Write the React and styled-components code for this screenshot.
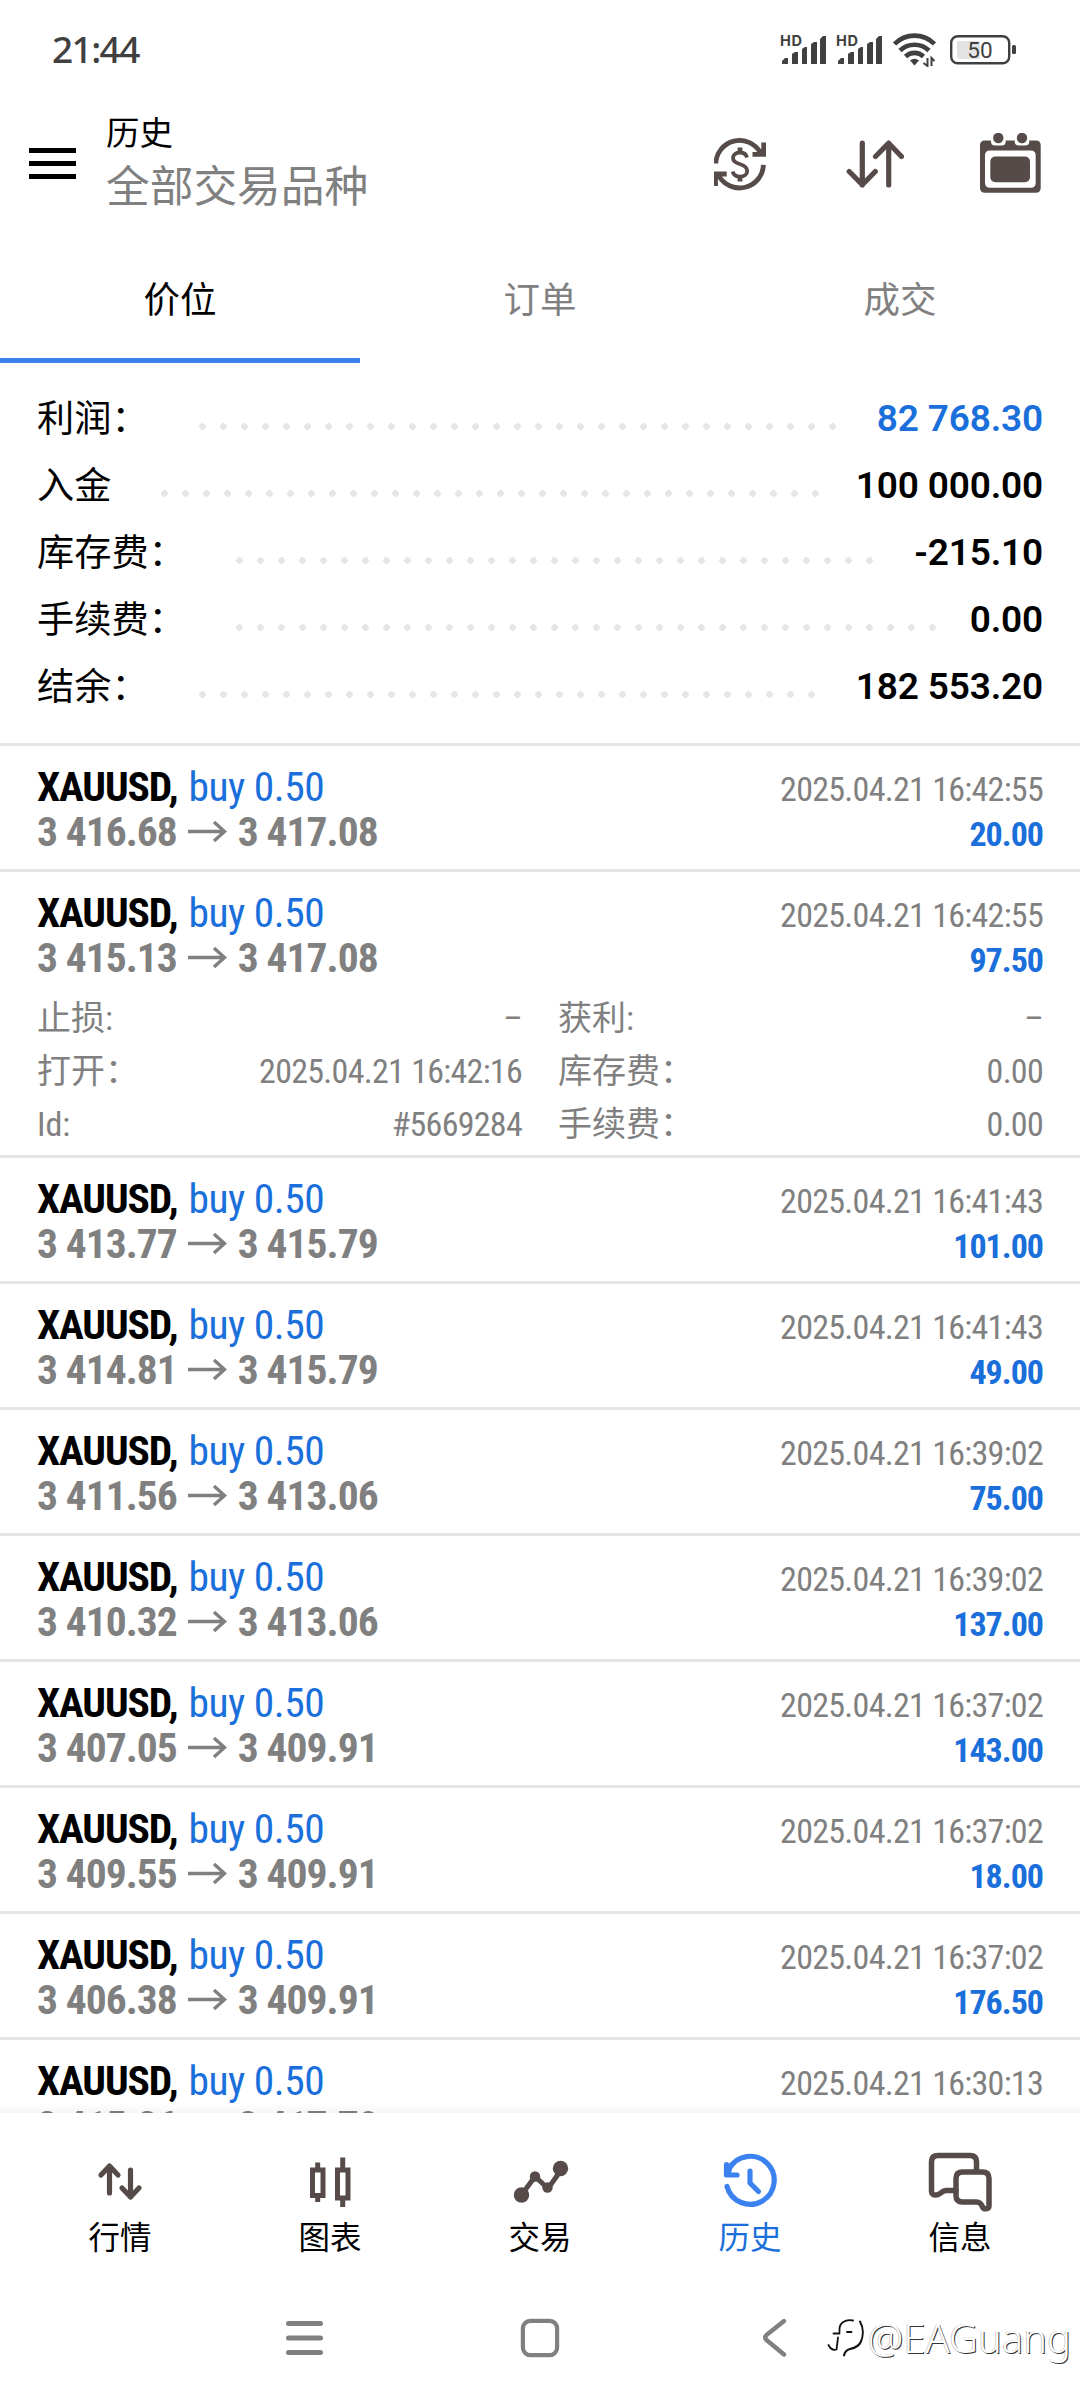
import styled, { createGlobalStyle } from "styled-components";

const BLUE = "#1a6fdb";
const GRAY = "#808080";
const ICON = "#564b48";

const SUMMARY = [
  { label: "利润：", value: "82 768.30", blue: true },
  { label: "入金", value: "100 000.00" },
  { label: "库存费：", value: "-215.10" },
  { label: "手续费：", value: "0.00" },
  { label: "结余：", value: "182 553.20" },
];

const DEALS = [
  { id: 1, open: "3 416.68", close: "3 417.08", time: "2025.04.21 16:42:55", profit: "20.00" },
  {
    id: 2,
    open: "3 415.13",
    close: "3 417.08",
    time: "2025.04.21 16:42:55",
    profit: "97.50",
    details: [
      ["止损:", "–"],
      ["获利:", "–"],
      ["打开：", "2025.04.21 16:42:16"],
      ["库存费：", "0.00"],
      ["Id:", "#5669284"],
      ["手续费：", "0.00"],
    ],
  },
  { id: 3, open: "3 413.77", close: "3 415.79", time: "2025.04.21 16:41:43", profit: "101.00" },
  { id: 4, open: "3 414.81", close: "3 415.79", time: "2025.04.21 16:41:43", profit: "49.00" },
  { id: 5, open: "3 411.56", close: "3 413.06", time: "2025.04.21 16:39:02", profit: "75.00" },
  { id: 6, open: "3 410.32", close: "3 413.06", time: "2025.04.21 16:39:02", profit: "137.00" },
  { id: 7, open: "3 407.05", close: "3 409.91", time: "2025.04.21 16:37:02", profit: "143.00" },
  { id: 8, open: "3 409.55", close: "3 409.91", time: "2025.04.21 16:37:02", profit: "18.00" },
  { id: 9, open: "3 406.38", close: "3 409.91", time: "2025.04.21 16:37:02", profit: "176.50" },
  { id: 10, open: "3 415.26", close: "3 417.70", time: "2025.04.21 16:30:13" },
];

const GlobalStyle = createGlobalStyle`
  * {
    box-sizing: border-box;
  }
  body {
    margin: 0;
    background: #fff;
  }
  svg {
    display: block;
    flex: none;
  }
`;

const Screen = styled.div`
  width: 1080px;
  height: 2400px;
  display: flex;
  flex-direction: column;
  overflow: hidden;
  background: #fff;
  color: #000;
  font-family: Roboto, "Noto Sans CJK SC", sans-serif;
`;

const StatusBar = styled.div`
  height: 100px;
  padding: 0 63px 0 52px;
  display: flex;
  align-items: center;
  justify-content: space-between;
  color: #404040;
`;

const Clock = styled.div`
  padding-bottom: 4px;
  font: 500 37px/1 "Noto Sans", sans-serif;
  letter-spacing: -1.6px;
`;

const StatusIcons = styled.div`
  display: flex;
  align-items: center;
`;

const Signal = styled.div`
  width: 56px;
`;

const Wifi = styled.div`
  width: 58px;
`;

const Header = styled.header`
  height: 145px;
  padding: 0 38px 18px 29px;
  display: flex;
  align-items: center;
`;

const Burger = styled.div`
  width: 47px;
  height: 31px;
  display: flex;
  flex-direction: column;
  justify-content: space-between;
`;

const BurgerLine = styled.span`
  height: 5px;
  background: #000;
`;

const Titles = styled.div`
  flex: 1;
  margin-left: 30px;
`;

const Title = styled.div`
  font-size: 33.5px;
  line-height: 46px;
`;

const Subtitle = styled.div`
  font-size: 43.7px;
  line-height: 60px;
  color: ${GRAY};
`;

const Actions = styled.div`
  display: flex;
  align-items: center;
  gap: 76px;
`;

const Tabs = styled.nav`
  height: 118px;
  display: grid;
  grid-template-columns: repeat(3, 1fr);
`;

const Tab = styled.div`
  display: flex;
  justify-content: center;
  padding-top: 29px;
  font-size: 36.5px;
  line-height: 54px;
  color: ${(props) => (props.$active ? "#000" : GRAY)};
  border-bottom: 5px solid ${(props) => (props.$active ? "#3d80ec" : "transparent")};
`;

const Summary = styled.section`
  height: 380px;
  padding: 22px 37px 0;
`;

const SummaryRow = styled.div`
  height: 67px;
  display: flex;
  align-items: center;
  font-size: 37.2px;
  line-height: 67px;
`;

const SummaryLabel = styled.div`
  padding-top: 2px;
  line-height: 65px;
`;

/* dotted leader between label and amount */
const Leader = styled.div`
  flex: 1;
  height: 7px;
  margin: 16px 30px 0 50px;
  background: radial-gradient(circle at 3.5px 3.5px, #e6e6e6 3px, transparent 3.6px) 0 0 / 21px 7px repeat-x;
`;

const Amount = styled.div`
  font-weight: 600;
  font-size: 37px;
  letter-spacing: -0.15px;
  color: ${(props) => (props.$blue ? BLUE : "#000")};
`;

const List = styled.section`
  position: relative;
  flex: 1;
  min-height: 0;
  overflow: hidden;
  font-family: "Roboto Condensed", Roboto, "Noto Sans CJK SC", sans-serif;
  font-stretch: 75%;

  &::after {
    content: "";
    position: absolute;
    left: 0;
    right: 0;
    bottom: 0;
    height: 10px;
    background: linear-gradient(transparent, rgba(0, 0, 0, 0.04));
  }
`;

const Deal = styled.article`
  padding: 18px 37px ${(props) => (props.$open ? "4px" : "15px")};
  border-top: 3px solid #e6e6e6;
`;

const Line = styled.div`
  height: 45px;
  display: flex;
  align-items: baseline;
  font-size: 41.5px;
  line-height: 45px;
  white-space: pre;
`;

const Symbol = styled.span`
  font-weight: 700;
  letter-spacing: -1.15px;
`;

const Side = styled.span`
  flex: 1;
  margin-left: 11px;
  letter-spacing: -0.5px;
  color: ${BLUE};
`;

const Time = styled.span`
  font-size: 34px;
  letter-spacing: -0.72px;
  color: ${GRAY};
`;

const Prices = styled.span`
  flex: 1;
  display: flex;
  align-items: center;
  gap: 11px;
  font-weight: 700;
  letter-spacing: -0.95px;
  color: ${GRAY};
`;

const Profit = styled.span`
  font-size: 34px;
  font-weight: 700;
  letter-spacing: -1px;
  color: ${BLUE};
`;

const Details = styled.div`
  margin-top: 12px;
  display: grid;
  grid-template-columns: 1fr 1fr;
  column-gap: 36px;
`;

const Detail = styled.div`
  height: 53px;
  display: flex;
  justify-content: space-between;
  font-size: 34px;
  line-height: 53px;
  color: ${GRAY};
`;

const DetailValue = styled.span`
  font-stretch: ${(props) => (props.$empty ? "100%" : "75%")};
  letter-spacing: -0.72px;
`;

const BottomNav = styled.nav`
  height: 177px;
  padding: 0 15px;
  display: grid;
  grid-template-columns: repeat(5, 1fr);
`;

const NavItem = styled.div`
  display: flex;
  flex-direction: column;
  align-items: center;
  padding-top: 37px;
  font-size: 31.5px;
  line-height: 46px;
  color: ${(props) => (props.$active ? BLUE : "#000")};
`;

const NavLabel = styled.div`
  margin-top: 4px;
`;

const SystemBar = styled.div`
  position: relative;
  height: 110px;
  padding: 0 286px 14px;
  display: flex;
  align-items: center;
  justify-content: space-between;
`;

const Watermark = styled.div`
  position: absolute;
  right: 9px;
  top: 23px;
  display: flex;
  align-items: center;
  gap: 4px;
  color: #fff;
  font: 300 40px/50px "Noto Sans", sans-serif;
  text-shadow: 1px 1px 0.5px #333, -0.5px -0.5px 0.5px #aaa;
`;

function SignalIcon() {
  return (
    <svg width="50" height="34" viewBox="0 0 50 34" fill="#404040">
      <text x="0" y="13" fontSize="14.5" fontWeight="700" fontFamily="Inter" textLength="22">HD</text>
      <path d="M2 31v-3l3-3h3v6zM12 31V21l3-2h3v12zM22 31V16l3-2h2v17zM31 31V11l3-2h3v22zM40 31V6l3-3h3v28z" />
    </svg>
  );
}

function WifiIcon() {
  return (
    <svg width="44" height="34" viewBox="0 0 44 34" fill="none" stroke="#404040" strokeWidth="4.6">
      <path d="M2.500 11a28 28 0 0 1 40 0M8 17.500a21 21 0 0 1 29 0M13.500 23.500a13 13 0 0 1 18 0" />
      <path d="M18 27.500q4.500-3.500 9 0l-4.500 5z" fill="#404040" stroke="none" />
      <path d="M35.500 25v8l-4-3M39.500 33v-8l3 3" strokeWidth="2" />
    </svg>
  );
}

function BatteryIcon() {
  return (
    <svg width="67" height="30" viewBox="0 0 67 30" fill="none">
      <path d="M7 6h23v18H10q-3 0-3-3z" fill="#e3e3e3" />
      <rect x="1.200" y="1.200" width="58" height="27" rx="6.500" stroke="#404040" strokeWidth="2.400" />
      <rect x="62" y="10" width="4" height="9" rx="1.500" fill="#404040" />
      <text x="30" y="22.500" fontSize="22.500" fontFamily="Roboto" textAnchor="middle" fill="#404040">50</text>
    </svg>
  );
}

function CurrencyIcon() {
  return (
    <svg width="54" height="54" viewBox="0 0 54 54" fill="none" stroke={ICON} strokeWidth="4.800">
      <path d="M1.800 26.500a23.800 23.800 0 0 1 44.500-11M49.400 27.900a23.800 23.800 0 0 1-44.500 11" />
      <path d="M47.300 5.500H52V19.800H38.500V15H44l3.300-3zM3.900 48.900H-0.500V34.600H12.700v4.800H7.200l-3.300 3z" fill={ICON} stroke="none" />
      <path d="M33 20.500c-0.800-3.200-3.600-5-7-5-4 0-7 2.300-7 5.600 0 3.800 3.600 5.100 7.200 6.200 4.100 1.300 7 3 7 6.700 0 3.400-3 5.700-7 5.700s-6.800-2.100-7.600-5.200" strokeWidth="3.800" />
      <path d="M26 10.500v5M26 39.500v5" />
    </svg>
  );
}

function SortIcon() {
  return (
    <svg width="60" height="50" viewBox="0 0 60 50" fill="none" stroke={ICON} strokeWidth="5.200" strokeLinecap="round" strokeLinejoin="round">
      <path d="M18.300 4v42M5.200 32.500l13.100 13.300 13-13.300M44.700 46V4M31.500 17.500L44.700 4.200l12.800 13.300" />
    </svg>
  );
}

function CalendarIcon() {
  return (
    <svg width="62" height="62" viewBox="0 0 62 62" fill={ICON}>
      <path
        fillRule="evenodd"
        d="M5 7.500h6v1q0 4 4 4h6.700q4 0 4-4v-1h9v1q0 4 4 4h6.600q4 0 4-4v-1h6.400q5 0 5 5v42.300q0 5-5 5H5q-5 0-5-5V12.500q0-5 5-5zM10 17.500q-5 0-5 5v27.300q0 5 5 5h40.700q5 0 5-5V22.500q0-5-5-5z"
      />
      <circle cx="18.300" cy="5" r="5.200" />
      <circle cx="42" cy="5" r="5.200" />
      <rect x="10.300" y="23.500" width="39.700" height="25.700" rx="5" />
    </svg>
  );
}

function ArrowIcon() {
  return (
    <svg width="39" height="22" viewBox="0 0 39 22" fill="none" stroke={GRAY} strokeWidth="3.400">
      <path d="M0 10.500h36M26 1l10.500 9.500L26 20" />
    </svg>
  );
}

function QuotesIcon() {
  return (
    <svg width="62" height="62" viewBox="0 0 62 62" fill="none" stroke={ICON} strokeWidth="5.200" strokeLinecap="round" strokeLinejoin="round">
      <path d="M20.500 43V16.500M12 25l8.500-9 8.500 9M41.500 20v26.500M33 38l8.500 9 8.500-9" />
    </svg>
  );
}

function ChartIcon() {
  return (
    <svg width="62" height="62" viewBox="0 0 62 62" fill="none" stroke={ICON} strokeWidth="5">
      <path d="M13.500 20h10.500v25.500H13.500zM38.500 20h10.500v28H38.500zM18.700 12.500v6M18.700 47v5M43.700 7.500v11M43.700 49v8" />
    </svg>
  );
}

function TradeIcon() {
  return (
    <svg width="62" height="62" viewBox="0 0 62 62" fill={ICON} stroke={ICON} strokeWidth="5">
      <path d="M12.500 45L26 26.500l13 12 13.500-19" fill="none" />
      <g stroke="none">
        <circle cx="12.500" cy="45" r="7.700" />
        <circle cx="26" cy="26.500" r="5.200" />
        <circle cx="38.500" cy="37.500" r="5.200" />
        <circle cx="51.500" cy="18.500" r="7.700" />
      </g>
    </svg>
  );
}

function HistoryIcon() {
  return (
    <svg width="62" height="62" viewBox="0 0 62 62" fill="none" stroke="#3b82f0" strokeWidth="5.200" strokeLinecap="round" strokeLinejoin="round">
      <path d="M8 36.500a24 24 0 1 0 2-17.500M7.500 14.500V25H18" />
      <path d="M7.500 24V20l4.500-2-1 6z" fill="#3b82f0" strokeWidth="2" />
      <path d="M31 21v12l8.500 8.500" />
    </svg>
  );
}

function MessagesIcon() {
  return (
    <svg width="64" height="62" viewBox="0 0 64 62" fill="none" stroke={ICON} strokeWidth="5.500" strokeLinecap="round" strokeLinejoin="round">
      <path d="M28 40.500H18c-5 0-5 4.500-10 4.500-3 0-4.500-1-4.500-4V12q0-6.500 6.500-6.500h32q6.500 0 6.500 6.500v9" />
      <path d="M34.500 22h20q6.500 0 6.500 6.500v27.500c0 3-5 4-6.500 1-1.500-4-3-5-6-5h-14q-6.500 0-6.500-6.500V28.500q0-6.500 6.500-6.500z" />
    </svg>
  );
}

function RecentsIcon() {
  return (
    <svg width="37" height="38" viewBox="0 0 37 38" stroke={GRAY} strokeWidth="5" strokeLinecap="round">
      <path d="M2.500 4.500h32M2.500 19h32M2.500 33.500h32" />
    </svg>
  );
}

function HomeIcon() {
  return (
    <svg width="40" height="40" viewBox="0 0 40 40" fill="none" stroke={GRAY} strokeWidth="4.200">
      <rect x="2.900" y="2.900" width="34.200" height="34.200" rx="7.500" />
    </svg>
  );
}

function BackIcon() {
  return (
    <svg width="37" height="40" viewBox="0 0 37 40" fill="none" stroke={GRAY} strokeWidth="4.400" strokeLinecap="round" strokeLinejoin="round">
      <path d="M27 3L9.500 17q-2.500 2.500 0 5L27 36.500" />
    </svg>
  );
}

function WatermarkLogo() {
  return (
    <svg width="37" height="40" viewBox="0 0 37 40" fill="none" stroke="#111" strokeLinecap="round">
      <path d="M26 2.500C18 1 12.500 5 12.500 11v3M6.500 15.500h6M20 14h4.500M1.500 27c2 4 5 5.500 8 4.500l1.500-12" strokeWidth="1.800" />
      <path d="M33 3.500c3.500 6 3.500 14 1 20-2 5-6 6.500-11 7.500-4 1-5.500 4-6 6.500" strokeWidth="2" />
    </svg>
  );
}

const NAV = [
  { label: "行情", icon: <QuotesIcon /> },
  { label: "图表", icon: <ChartIcon /> },
  { label: "交易", icon: <TradeIcon /> },
  { label: "历史", icon: <HistoryIcon />, active: true },
  { label: "信息", icon: <MessagesIcon /> },
];

function DealRow({ deal }) {
  return (
    <Deal $open={!!deal.details}>
      <Line>
        <Symbol>XAUUSD,</Symbol>
        <Side>buy 0.50</Side>
        <Time>{deal.time}</Time>
      </Line>
      <Line>
        <Prices>
          {deal.open}
          <ArrowIcon />
          {deal.close}
        </Prices>
        {deal.profit && <Profit>{deal.profit}</Profit>}
      </Line>
      {deal.details && (
        <Details>
          {deal.details.map(([name, value]) => (
            <Detail key={name}>
              <span>{name}</span>
              <DetailValue $empty={value === "–"}>{value}</DetailValue>
            </Detail>
          ))}
        </Details>
      )}
    </Deal>
  );
}

export default function App() {
  return (
    <Screen>
      <GlobalStyle />
      <StatusBar>
        <Clock>21:44</Clock>
        <StatusIcons>
          <Signal><SignalIcon /></Signal>
          <Signal><SignalIcon /></Signal>
          <Wifi><WifiIcon /></Wifi>
          <BatteryIcon />
        </StatusIcons>
      </StatusBar>
      <Header>
        <Burger>
          <BurgerLine />
          <BurgerLine />
          <BurgerLine />
        </Burger>
        <Titles>
          <Title>历史</Title>
          <Subtitle>全部交易品种</Subtitle>
        </Titles>
        <Actions>
          <CurrencyIcon />
          <SortIcon />
          <CalendarIcon />
        </Actions>
      </Header>
      <Tabs>
        <Tab $active>价位</Tab>
        <Tab>订单</Tab>
        <Tab>成交</Tab>
      </Tabs>
      <Summary>
        {SUMMARY.map((row) => (
          <SummaryRow key={row.label}>
            <SummaryLabel>{row.label}</SummaryLabel>
            <Leader />
            <Amount $blue={row.blue}>{row.value}</Amount>
          </SummaryRow>
        ))}
      </Summary>
      <List>
        {DEALS.map((deal) => (
          <DealRow key={deal.id} deal={deal} />
        ))}
      </List>
      <BottomNav>
        {NAV.map((item) => (
          <NavItem key={item.label} $active={item.active}>
            {item.icon}
            <NavLabel>{item.label}</NavLabel>
          </NavItem>
        ))}
      </BottomNav>
      <SystemBar>
        <RecentsIcon />
        <HomeIcon />
        <BackIcon />
        <Watermark>
          <WatermarkLogo />
          @EAGuang
        </Watermark>
      </SystemBar>
    </Screen>
  );
}
